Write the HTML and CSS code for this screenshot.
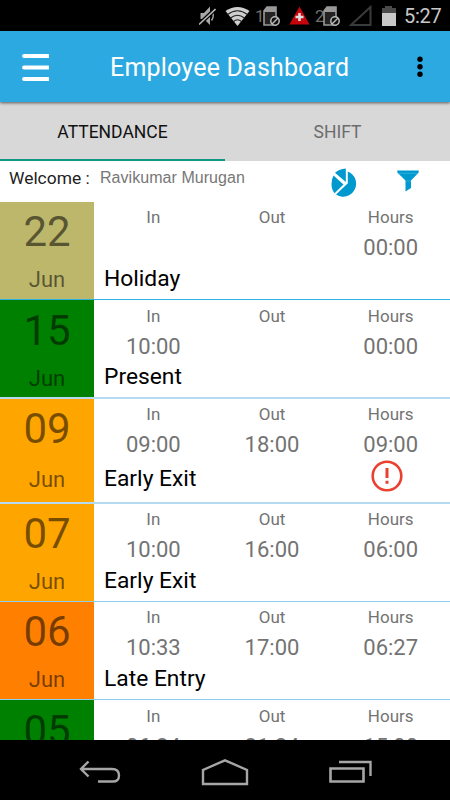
FILE: index.html
```
<!DOCTYPE html>
<html lang="en">
<head>
    <meta charset="utf-8">
    <title>Employee Dashboard</title>
    <link rel="stylesheet" href="styles.css">
</head>
<body>
    <div class="screen">
        <!-- Android status bar -->
        <div class="statusbar">
            <svg class="mute" width="17" height="20" viewBox="0 0 17 20">
                <path d="M1.500 7h3.500L11 0.500v18.500l-6-6H1.500z" fill="#a8a8a8"/>
                <path d="M12.500 4.500q3.500 5 0 10" fill="none" stroke="#a8a8a8" stroke-width="1.500"/>
                <path d="M0 18.500L16.500 3" stroke="#000" stroke-width="4"/>
                <path d="M0 18.500L16.500 3" stroke="#b8b8b8" stroke-width="1.600"/>
            </svg>
            <svg class="wifi" width="25" height="20" viewBox="0 0 25 20">
                <path d="M0.500 5Q12.500-3 24.500 5L12.500 20z" fill="#cfcfcf"/>
                <path d="M2.500 8.500Q12.500 1 22.500 8.500M5.500 12Q12.500 6.500 19.500 12M8.500 15.500Q12.500 12 16.500 15.500" fill="none" stroke="#222" stroke-width="1.100"/>
            </svg>
            <span class="sim-no">1</span>
            <svg class="sim" width="18" height="20" viewBox="0 0 18 20">
                <path d="M5 1h9v18H2V5z" fill="#222" stroke="#999" stroke-width="1.600"/>
                <path d="M5 1h9v5H2V4z" fill="#999"/>
                <circle cx="13" cy="15" r="4.200" fill="#111" stroke="#bbb" stroke-width="1.500"/>
                <path d="M10 18l6-6" stroke="#bbb" stroke-width="1.400"/>
            </svg>
            <svg class="alert" width="21" height="19" viewBox="0 0 21 19">
                <path d="M10.500 0.500L20.500 18.500H0.500z" fill="#c4060c"/>
                <path d="M10.500 7v8M6.500 11h8" stroke="#ddd" stroke-width="2.600"/>
            </svg>
            <span class="sim-no">2</span>
            <svg class="sim" width="18" height="20" viewBox="0 0 18 20">
                <path d="M5 1h9v18H2V5z" fill="#222" stroke="#999" stroke-width="1.600"/>
                <path d="M5 1h9v5H2V4z" fill="#999"/>
                <circle cx="13" cy="15" r="4.200" fill="#111" stroke="#bbb" stroke-width="1.500"/>
                <path d="M10 18l6-6" stroke="#bbb" stroke-width="1.400"/>
            </svg>
            <svg class="signal" width="23" height="21" viewBox="0 0 23 21">
                <path d="M21.500 2v18H2z" fill="none" stroke="#3a3b3d" stroke-width="2"/>
            </svg>
            <svg class="battery" width="14" height="20" viewBox="0 0 14 20">
                <path d="M0 2h3V0h7v2h4v6H0z" fill="#4a4a4a"/>
                <path d="M0 7h14v13H0z" fill="#c8c8c8"/>
            </svg>
            <span class="clock">5:27</span>
        </div>

        <div class="header">
            <svg class="menu" width="28" height="28" viewBox="0 0 28 28">
                <path d="M3 3h24M3 14.500h24M3 26h24" stroke="#fff" stroke-width="3.800" stroke-linecap="round"/>
            </svg>
            <h1>Employee Dashboard</h1>
            <svg class="more" width="6" height="22" viewBox="0 0 6 22">
                <circle cx="3" cy="3.300" r="2.700"/>
                <circle cx="3" cy="10.800" r="2.700"/>
                <circle cx="3" cy="18.300" r="2.700"/>
            </svg>
        </div>

        <div class="tabs">
            <a class="tab active">ATTENDANCE</a>
            <a class="tab">SHIFT</a>
        </div>

        <div class="welcome">
            <span class="welcome-label">Welcome :</span>
            <span class="welcome-name">Ravikumar Murugan</span>
            <svg class="pie" width="30" height="30" viewBox="0 0 30 30">
                <path d="M16.800 3.500A13 13 0 1 1 5 26.500L14.500 17.500L16.800 15.500z" fill="#0099cf"/>
                <path d="M14.800 0.500V14L4 4.800Q8.500 0.800 14.800 0.500z" fill="#0099cf"/>
                <path d="M2.500 7.500L12.500 16.500L3.500 25.300Q0.500 21.500 0.500 16Q0.500 11 2.500 7.500z" fill="#0099cf"/>
            </svg>
            <svg class="filter" width="22" height="22" viewBox="0 0 22 22">
                <path d="M0.300 0.500h21.400v2L14 10.500V18l-5.500 3.500v-11L0.300 2.500z" fill="#0099cf"/>
                <path d="M2 3.300h18M8 11h6" stroke="#3fb3dc" stroke-width="0.700"/>
            </svg>
        </div>

        <div class="list">
            <div class="row holiday">
                <div class="date"><span class="day">22</span><span class="month">Jun</span></div>
                <div class="info">
                    <div class="times">
                        <div class="col"><label>In</label></div>
                        <div class="col"><label>Out</label></div>
                        <div class="col"><label>Hours</label><b>00:00</b></div>
                    </div>
                    <div class="status">Holiday</div>
                </div>
            </div>
            <div class="row present thick">
                <div class="date"><span class="day">15</span><span class="month">Jun</span></div>
                <div class="info">
                    <div class="times">
                        <div class="col"><label>In</label><b>10:00</b></div>
                        <div class="col"><label>Out</label></div>
                        <div class="col"><label>Hours</label><b>00:00</b></div>
                    </div>
                    <div class="status">Present</div>
                </div>
            </div>
            <div class="row early thick flagged">
                <div class="date"><span class="day">09</span><span class="month">Jun</span></div>
                <div class="info">
                    <div class="times">
                        <div class="col"><label>In</label><b>09:00</b></div>
                        <div class="col"><label>Out</label><b>18:00</b></div>
                        <div class="col"><label>Hours</label><b>09:00</b></div>
                    </div>
                    <div class="status">Early Exit
                        <svg class="warn" width="32" height="32" viewBox="0 0 32 32">
                            <circle cx="16" cy="16" r="14.300" fill="none" stroke="#ea4030" stroke-width="2.600"/>
                            <path d="M16 8v10M16 20.700v3" stroke="#ea4030" stroke-width="3"/>
                        </svg>
                    </div>
                </div>
            </div>
            <div class="row early">
                <div class="date"><span class="day">07</span><span class="month">Jun</span></div>
                <div class="info">
                    <div class="times">
                        <div class="col"><label>In</label><b>10:00</b></div>
                        <div class="col"><label>Out</label><b>16:00</b></div>
                        <div class="col"><label>Hours</label><b>06:00</b></div>
                    </div>
                    <div class="status">Early Exit</div>
                </div>
            </div>
            <div class="row late">
                <div class="date"><span class="day">06</span><span class="month">Jun</span></div>
                <div class="info">
                    <div class="times">
                        <div class="col"><label>In</label><b>10:33</b></div>
                        <div class="col"><label>Out</label><b>17:00</b></div>
                        <div class="col"><label>Hours</label><b>06:27</b></div>
                    </div>
                    <div class="status">Late Entry</div>
                </div>
            </div>
            <div class="row present">
                <div class="date"><span class="day">05</span></div>
                <div class="info">
                    <div class="times">
                        <div class="col"><label>In</label><b>06:24</b></div>
                        <div class="col"><label>Out</label><b>21:24</b></div>
                        <div class="col"><label>Hours</label><b>15:00</b></div>
                    </div>
                </div>
            </div>
        </div>

        <!-- system buttons -->
        <div class="navbar">
            <svg width="42" height="24" viewBox="0 0 42 24">
                <path d="M9.500 1.500L2 9l7.500 7.500M2 9h31q7 0 7 6.500T33 21.500H19" fill="none" stroke="#a6a6a6" stroke-width="2.400"/>
            </svg>
            <svg width="48" height="28" viewBox="0 0 48 28">
                <path d="M2 26V12L24 2.300L46 12v14z" fill="none" stroke="#a6a6a6" stroke-width="2.400"/>
            </svg>
            <svg width="44" height="24" viewBox="0 0 44 24">
                <path d="M1.500 8.500h33v13h-33z" fill="none" stroke="#a6a6a6" stroke-width="2.600"/>
                <path d="M10 2h31.500v14" fill="none" stroke="#a6a6a6" stroke-width="2.400"/>
            </svg>
        </div>
    </div>
</body>
</html>
```

FILE: styles.css
```
body {
    margin: 0;
    font-family: Roboto, sans-serif;
    background-color: #fff;
}

.screen {
    width: 450px;
    height: 800px;
    display: flex;
    flex-direction: column;
    overflow: hidden;
}

svg {
    display: block;
    flex: none;
}

/* Status bar */
.statusbar {
    height: 31px;
    flex: none;
    box-sizing: border-box;
    padding: 0 7px 0 199px;
    background-color: #000;
    display: flex;
    align-items: center;
}

.wifi {
    margin-left: 9px;
}

.sim-no {
    width: 8px;
    margin-left: 5px;
    font-size: 17px;
    line-height: 31px;
    color: #707070;
    padding-top: 2px;
}

.alert {
    margin-left: 9px;
}

.sim-no + .sim {
    margin-left: -1px;
}

.signal {
    margin-left: 9px;
}

.battery {
    margin-left: 10px;
}

.clock {
    margin-left: 8px;
    font-size: 20px;
    letter-spacing: -0.3px;
    line-height: 31px;
    padding-top: 2px;
    color: #c8c8c8;
}

/* Title bar */
.header {
    height: 71px;
    flex: none;
    box-sizing: border-box;
    padding: 0 27px 0 21px;
    background-color: #2ca9e0;
    display: flex;
    align-items: center;
    box-shadow: 0 1px 3px rgba(0, 0, 0, 0.6);
    position: relative;
}

.header h1 {
    flex: 1;
    margin: 2px 0 0 61px;
    font-size: 25px;
    font-weight: normal;
    letter-spacing: 0.2px;
    line-height: 30px;
    color: #fff;
    white-space: nowrap;
}

/* Tabs */
.tabs {
    height: 59px;
    flex: none;
    display: flex;
    background-color: #d8d8d8;
}

.tab {
    flex: 1;
    box-sizing: border-box;
    border-bottom: 2px solid #d8d8d8;
    font-size: 17.5px;
    line-height: 61px;
    text-align: center;
    color: #6c6c6c;
}

.tab.active {
    color: #111;
    border-bottom-color: #119788;
}

/* Welcome line */
.welcome {
    height: 41px;
    flex: none;
    display: flex;
    padding-left: 9px;
}

.welcome-label {
    width: 91px;
    font-size: 17.4px;
    line-height: 35px;
    color: #222;
}

.welcome-name {
    width: 231px;
    font-family: "Liberation Sans", Arial, sans-serif;
    font-size: 16px;
    letter-spacing: 0.05px;
    line-height: 34px;
    color: #777;
}

.pie {
    margin-top: 7px;
}

.filter {
    margin: 9px 0 0 36px;
}

/* Attendance list */
.list {
    flex: 1;
    min-height: 0;
    overflow: hidden;
}

.row {
    display: flex;
    height: 97px;
    border-bottom: 1px solid #8fcdf0;
}

.row.thick {
    border-bottom: 2px solid #b3dbf3;
}

.row.flagged {
    height: 103px;
}

.row.holiday {
    border-bottom-color: #2cb2e0;
}

.date {
    width: 94px;
    flex: none;
    text-align: center;
    color: rgba(0, 0, 0, 0.54);
}

.holiday .date {
    background-color: #bdb76b;
}

.present .date {
    background-color: #008000;
}

.early .date {
    background-color: #ffa500;
}

.late .date {
    background-color: #ff8000;
}

.day {
    display: block;
    font-size: 42px;
    line-height: 60px;
}

.month {
    display: block;
    font-size: 22px;
    line-height: 35px;
}

.present .day {
    padding-top: 1px;
}

.flagged .month {
    margin-top: 3px;
}

.info {
    flex: 1;
}

.times {
    display: flex;
    height: 61px;
}

.present .col {
    padding-top: 1px;
}

.col {
    flex: 1;
    text-align: center;
    color: #737373;
}

.col label {
    display: block;
    font-size: 17px;
    line-height: 30px;
}

.col b {
    display: block;
    font-size: 22px;
    font-weight: normal;
    line-height: 31px;
}

.status {
    display: flex;
    justify-content: space-between;
    margin-left: 10px;
    padding-right: 47px;
    font-size: 22.8px;
    line-height: 32px;
    color: #000;
}

.flagged .status {
    margin-top: 3px;
}

.warn {
    margin-top: -3px;
}

/* Bottom buttons */
.navbar {
    height: 60px;
    flex: none;
    box-sizing: border-box;
    padding: 3px 77px 0 79px;
    background-color: #000;
    display: flex;
    align-items: center;
    justify-content: space-between;
}
```
